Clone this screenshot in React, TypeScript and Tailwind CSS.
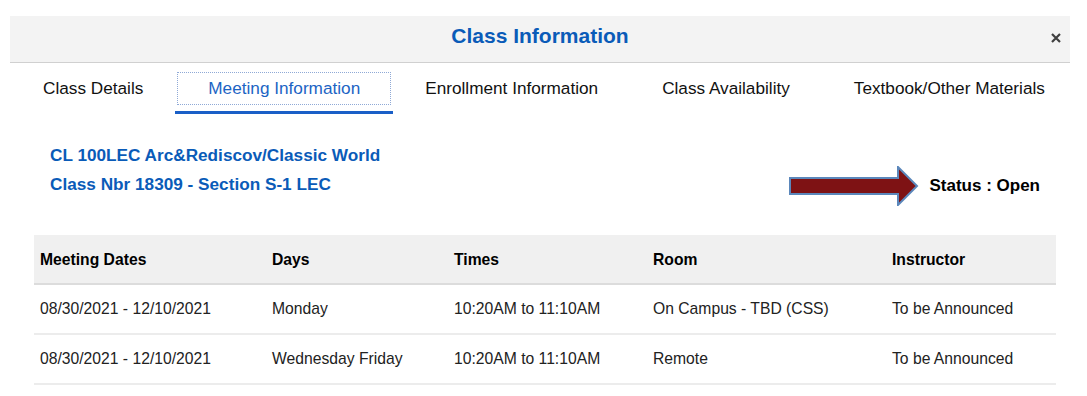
import React from "react";

const tabs = [
  "Class Details",
  "Meeting Information",
  "Enrollment Information",
  "Class Availability",
  "Textbook/Other Materials",
];

const meetings = [
  {
    dates: "08/30/2021 - 12/10/2021",
    days: "Monday",
    times: "10:20AM to 11:10AM",
    room: "On Campus - TBD (CSS)",
    instructor: "To be Announced",
  },
  {
    dates: "08/30/2021 - 12/10/2021",
    days: "Wednesday Friday",
    times: "10:20AM to 11:10AM",
    room: "Remote",
    instructor: "To be Announced",
  },
];

const cols = ["w-[232px]", "w-[182px]", "w-[199px]", "w-[239px]", "flex-1"];

export default function App() {
  return (
    <div className="w-[1087px] h-[396px] bg-white pt-[16px] px-[10px] font-['Liberation_Sans',Arial,sans-serif] text-[#222] overflow-hidden">
      <div className="w-[1060px]">
        {/* header */}
        <div className="relative h-[47px] bg-[#f3f3f3] border-b border-[#d0d0d0] flex justify-center pt-[6px]">
          <h1 className="text-[21px] font-bold text-[#0a5bb8] leading-[28px]">
            Class Information
          </h1>
          <button className="absolute right-[9px] top-[17px] w-[10px] h-[10px]">
            <svg viewBox="0 0 10 10" width="10" height="10">
              <path d="M1 1 L9 9 M9 1 L1 9" stroke="#3f3f3f" strokeWidth="2.2" />
            </svg>
          </button>
        </div>

        {/* tabs */}
        <div className="flex pl-[1px] pt-[9px] whitespace-nowrap">
          {tabs.map((t, i) =>
            i === 1 ? (
              <div key={t} className="flex flex-col shrink-0">
                <div className="mx-[2px] h-[33px] px-[30px] border border-dotted border-[#8fa9d6] flex items-center text-[17.2px] text-[#1c64c4]">
                  {t}
                </div>
                <div className="mt-[6px] h-[3px] bg-[#1a5fc7]" />
              </div>
            ) : (
              <div key={t} className="shrink-0 h-[33px] px-[32px] flex items-center text-[17.2px] text-[#111]">
                {t}
              </div>
            )
          )}
        </div>

        {/* course info */}
        <div className="flex items-end justify-between pl-[40px] pr-[30px] pt-[27px]">
          <div className="text-[17.2px] font-bold text-[#0a5bb8] leading-[29px]">
            <div>CL 100LEC Arc&amp;Rediscov/Classic World</div>
            <div>Class Nbr 18309 - Section S-1 LEC</div>
          </div>
          <div className="flex items-center gap-[10px] mb-[-7px]">
            <svg width="130" height="40" viewBox="0 0 130 40">
              <polygon
                points="1,12 109,12 109,1 128,20 109,39 109,28 1,28"
                fill="#7e1214"
                stroke="#5b87bb"
                strokeWidth="2"
              />
            </svg>
            <span className="text-[17px] font-bold text-black">Status : Open</span>
          </div>
        </div>

        {/* table */}
        <div className="ml-[24px] w-[1022px] mt-[36px] text-[15.7px]">
          <div className="flex h-[50px] bg-[#f0f0f0] border-b-2 border-[#dcdcdc] font-bold text-black">
            {["Meeting Dates", "Days", "Times", "Room", "Instructor"].map((h, i) => (
              <div key={h} className={`${cols[i]} pl-[6px] pt-[13px]`}>
                {h}
              </div>
            ))}
          </div>
          {meetings.map((m, r) => (
            <div key={r} className="flex h-[50px] border-b-2 border-[#ececec] text-[#222]">
              {[m.dates, m.days, m.times, m.room, m.instructor].map((c, i) => (
                <div key={i} className={`${cols[i]} pl-[6px] pt-[12px]`}>
                  {c}
                </div>
              ))}
            </div>
          ))}
        </div>
      </div>
    </div>
  );
}
